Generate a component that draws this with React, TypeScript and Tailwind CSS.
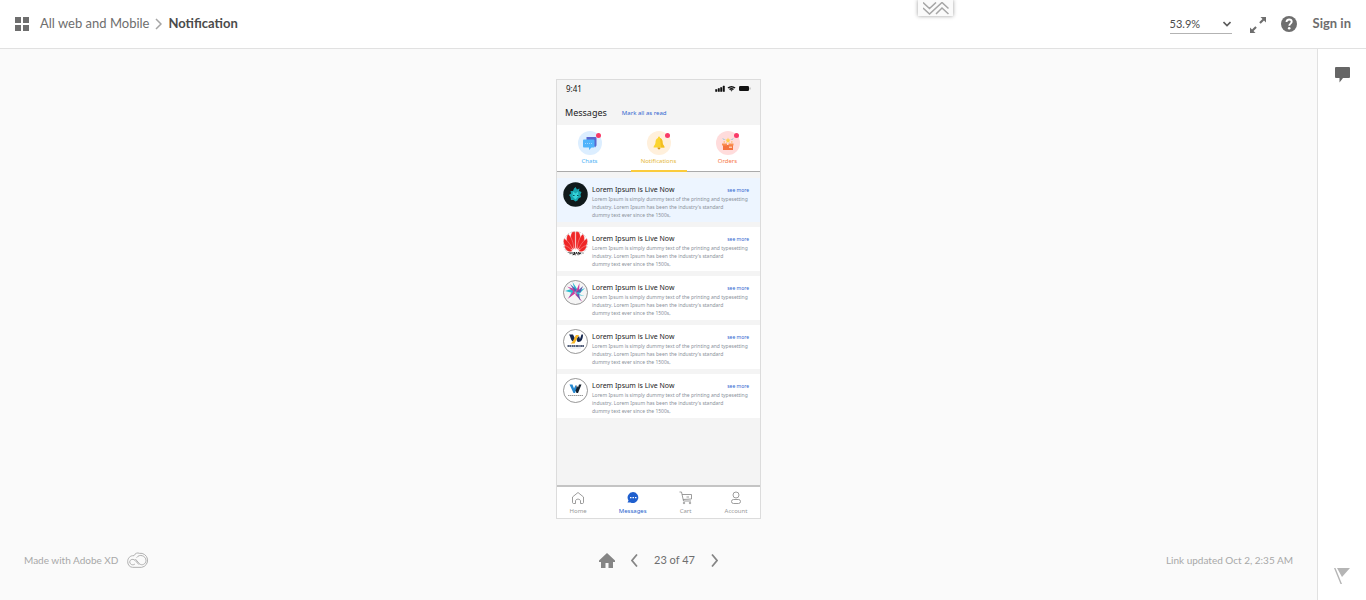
import type { ReactNode } from "react";

const ui = "font-['Lato','Open_Sans',sans-serif]";

function Avatar({ kind }: { kind: number }) {
  return (
    <svg viewBox="0 0 50 50" className="size-[25px] shrink-0" aria-hidden="true">
      {kind === 0 && (
        <g>
          <circle cx="25" cy="25" r="24.5" fill="#10191b" />
          <path d="M25 10l3 5 5-2-1 5 5 2-2 5 1 5-5 3-2 4-4 2-4-3-5 0-1-6-3-4 4-3-1-5 5 0 2-5z" fill="#17a3ad" />
          <path d="M20 19l5 4 5-4 1 9-6 7-6-6z" fill="#35d3d9" />
          <path d="M20 27h3m5 0h3" stroke="#0b4a52" strokeWidth="2" />
        </g>
      )}
      {kind === 1 && (
        <g>
          <circle cx="25" cy="25" r="24" fill="#fff" stroke="#888" strokeWidth="1" strokeDasharray="3 3" />
          <g fill="#ef2626" stroke="#fff" strokeWidth="0.6">
            <path d="M24.500 37C13 24 13 8 19 1.500h5.500z" />
            <path d="M25.500 37C37 24 37 8 31 1.500h-5.500z" />
            <path d="M22 37C9 30 3 16 10 6c7 5 11 18 12 31z" />
            <path d="M28 37c13-7 19-21 12-31-7 5-11 18-12 31z" />
            <path d="M20 38C7 37-2 27 2 15c7 3 14 14 18 23z" />
            <path d="M30 38c13-1 22-11 18-23-7 3-14 14-18 23z" />
            <path d="M19 40c-7 4-14 0-17-11 7 1 13 6 17 11z" />
            <path d="M31 40c7 4 14 0 17-11-7 1-13 6-17 11z" />
          </g>
          <path d="M11 42l3 3m2-3v4m4-4v5h3v-5m2 5l2-5 2 5m2-5l1 5 2-4 1 3m3-3l2 2" stroke="#222" strokeWidth="2" fill="none" />
        </g>
      )}
      {kind === 2 && (
        <g>
          <circle cx="25" cy="25" r="24" fill="#f5f5f5" stroke="#777" strokeWidth="1.5" />
          <path d="M25 25L19 4l10 15zM25 25L44 16l-13 13zM24 27L4 22l16-5zM24 26L12 35l6-14zM25 26L43 32l-13-2z" fill="#27bdd0" />
          <path d="M24 25L8 13l15 5zM25 25L33 6l-1 18zM24 27L9 38l12-16zM25 24l14 20-14-14z" fill="#cf3b9c" />
          <path d="M24 24L14 8l13 11zM27 24L40 12l-5 13zM27 29l8 13-3-14z" fill="#5460b0" />
        </g>
      )}
      {kind === 3 && (
        <g>
          <circle cx="25" cy="25" r="24" fill="#fff" stroke="#777" strokeWidth="1.5" />
          <path d="M12 11h8l4 8-3 6c-6-1-5-9-9-14z" fill="#14264d" />
          <path d="M26 12h6l-9 17h-8c6-3 7-12 11-17z" fill="#f6b422" />
          <path d="M28 19l4-5 2 6 3-9h3c0 9-3 15-9 15-3 0-4-3-3-7z" fill="#14264d" />
          <path d="M9 34h33" stroke="#1c2c50" strokeWidth="3" strokeDasharray="4 0.500 3 1" />
          <path d="M14 38h22" stroke="#c5c8d4" strokeWidth="1" />
        </g>
      )}
      {kind === 4 && (
        <g>
          <circle cx="25" cy="25" r="24" fill="#fff" stroke="#777" strokeWidth="1.5" />
          <path d="M13 13h6l3 8 3-7 3 6-4 10h-3z" fill="#2587cf" />
          <path d="M27 14l3 5 2-6h5l-7 17h-3l-2-5 2-5z" fill="#17222e" />
          <path d="M10 35h30" stroke="#777" strokeWidth="1.5" strokeDasharray="3 1" />
        </g>
      )}
    </svg>
  );
}

function ChatArt() {
  return (
    <svg viewBox="0 0 48 48" className="size-6" aria-hidden="true">
      <circle cx="24" cy="24" r="24" fill="#dceeff" />
      <path d="M17 12h17c2 0 3 1 3 3v14l-3 4-3-5H17z" fill="#5967cf" />
      <path d="M12 17h19c1 0 2 1 2 2v12c0 1-1 2-2 2h-4l-5 5v-5H12c-1 0-2-1-2-2V19c0-1 1-2 2-2z" fill="#4fb3fb" />
      <path d="M14 25h15" stroke="#9fd5ff" strokeWidth="2" strokeDasharray="2 2" />
    </svg>
  );
}

function BellArt() {
  return (
    <svg viewBox="0 0 48 48" className="size-6" aria-hidden="true">
      <circle cx="24" cy="24" r="24" fill="#fff0dc" />
      <path d="M24 11c2 0 2 2 2 3 4 1 5 5 5 9 0 5 4 6 4 10H13c0-4 4-5 4-10 0-4 1-8 5-9 0-1 0-3 2-3z" fill="#fbd42f" />
      <path d="M26 14c4 1 5 5 5 9 0 5 4 6 4 10h-7z" fill="#f3bd20" />
      <path d="M21 33h6c0 5-6 5-6 0z" fill="#d99a17" />
    </svg>
  );
}

function OrderArt() {
  return (
    <svg viewBox="0 0 48 48" className="size-6" aria-hidden="true">
      <circle cx="24" cy="24" r="24" fill="#ffdcdc" />
      <path d="M14 28h20v10H14z" fill="#f47340" />
      <path d="M12 25h10v4H12zM25 25h10v4H25z" fill="#fa8f50" />
      <path d="M26 31h6v3h-6z" fill="#ffcaa8" />
      <path d="M24 13l1.500 4 4 0-3 3 1 4-3.500-2-3.500 2 1-4-3-3 4 0z" fill="#ffcf4a" />
      <path d="M14 15l3 3m17-3l-3 3" stroke="#6cc5d8" strokeWidth="2" />
      <path d="M15 22h3m12 0h3" stroke="#ffb347" strokeWidth="2" />
    </svg>
  );
}

const tabs: { label: string; color: string; art: ReactNode; active?: boolean }[] = [
  { label: "Chats", color: "text-[#4db2f5]", art: <ChatArt /> },
  { label: "Notifications", color: "text-[#e6b93c]", art: <BellArt />, active: true },
  { label: "Orders", color: "text-[#f77a4a]", art: <OrderArt /> },
];

const rows = [0, 1, 2, 3, 4];

function Phone() {
  return (
    <article className="flex w-[205px] flex-col border border-[#dcdcdc] bg-[#f4f4f4] font-['Noto_Sans',sans-serif]">
      <div className="flex h-[17px] items-center justify-between pr-[9px] pl-[9px]">
        <span className="text-[8px] leading-4 text-[#111]">9:41</span>
        <svg viewBox="0 0 72 14" className="h-[7px] w-9" aria-hidden="true">
          <path d="M1 9h3v4H1zM6 7h3v6H6zM11 5h3v8h-3zM16 2h3v11h-3z" fill="#111" stroke="#111" />
          <path d="M25 5c5-4 11-4 16 0l-2 2c-4-3-8-3-12 0zM28 8c3-3 7-3 10 0l-2 2c-2-1-4-1-6 0zM31 11c1-1 3-1 4 0l-2 2z" fill="#111" />
          <rect x="48" y="2" width="20" height="10" rx="2.500" fill="#111" />
          <path d="M70 5v4" stroke="#888" strokeWidth="1.500" />
        </svg>
      </div>
      <div className="flex h-7 items-center gap-[15px] pt-1 pl-2">
        <h1 className="text-[9px] leading-3 text-[#222]">Messages</h1>
        <button type="button" className="text-[6px] leading-3 text-[#2f66d0]">Mark all as read</button>
      </div>
      <nav className="flex h-[47px] justify-center gap-[13px] border-b border-[#aaa] bg-white">
        {tabs.map((t) => (
          <a
            key={t.label}
            href="#"
            className={`relative -mb-px flex w-14 flex-col items-center pt-[6px] ${t.active ? "border-b-2 border-[#fbcb3b]" : ""}`}
          >
            {t.art}
            <span className="absolute top-2 left-[34px] size-[5px] rounded-full bg-[#f93a67]" />
            <span className={`pt-[2px] text-[6px] leading-2 ${t.color}`}>{t.label}</span>
          </a>
        ))}
      </nav>
      <ul className="flex flex-col gap-[5px] pt-[6px]">
        {rows.map((i) => (
          <li key={i} className={`flex h-11 gap-1 pr-[11px] pl-[6px] ${i === 0 ? "bg-[#edf5ff]" : "bg-white"}`}>
            <div className="pt-1">
              <Avatar kind={i} />
            </div>
            <div className="flex-1 pt-[7px]">
              <div className="flex items-center justify-between">
                <h2 className="text-[7px] leading-[10px] text-[#222]">Lorem Ipsum is Live Now</h2>
                <a href="#" className="text-[5px] leading-[10px] text-[#2f66d0]">see more</a>
              </div>
              <p className="text-[5px] leading-2 whitespace-nowrap text-[#8b929b]">
                Lorem Ipsum is simply dummy text of the printing and typesetting
                <br />
                industry. Lorem Ipsum has been the industry&apos;s standard
                <br />
                dummy text ever since the 1500s,
              </p>
            </div>
          </li>
        ))}
      </ul>
      <nav className="mt-[67px] flex h-[33px] justify-center gap-8 border-t-2 border-[#c4c4c4] bg-white text-[6px] text-[#999]">
        <a href="#" className="flex flex-col items-center pt-1">
          <svg viewBox="0 0 28 28" className="size-[14px]" fill="none" stroke="#8b8b8b" strokeWidth="1.700" aria-hidden="true">
            <path d="M3 12L14 3l11 9v11c0 1-1 2-2 2h-4v-5c0-5-10-5-10 0v5H5c-1 0-2-1-2-2z" strokeLinejoin="round" />
          </svg>
          <span className="leading-3">Home</span>
        </a>
        <a href="#" className="flex flex-col items-center pt-1 text-[#1f5fce]">
          <svg viewBox="0 0 28 28" className="size-[14px]" aria-hidden="true">
            <path d="M14 2a11 11 0 1 1-5 21H3l2-4A11 11 0 0 1 14 2z" fill="#1f5fce" />
            <path d="M8 13h3m2 0h3m2 0h3" stroke="#fff" strokeWidth="2.500" />
          </svg>
          <span className="leading-3">Messages</span>
        </a>
        <a href="#" className="flex flex-col items-center pt-1">
          <svg viewBox="0 0 28 28" className="size-[14px]" fill="none" stroke="#8b8b8b" strokeWidth="1.700" aria-hidden="true">
            <path d="M1 2h4l4 18h15M6 7h19v9l-17 1M15 12h5" />
            <circle cx="10" cy="24" r="1.500" />
            <circle cx="22" cy="24" r="1.500" />
          </svg>
          <span className="leading-3">Cart</span>
        </a>
        <a href="#" className="flex flex-col items-center pt-1">
          <svg viewBox="0 0 28 28" className="size-[14px]" fill="none" stroke="#8b8b8b" strokeWidth="1.700" aria-hidden="true">
            <circle cx="14" cy="8" r="6" />
            <rect x="5" y="17" width="18" height="8" rx="4" />
          </svg>
          <span className="leading-3">Account</span>
        </a>
      </nav>
    </article>
  );
}

export default function App() {
  return (
    <div className={`relative flex min-h-screen flex-col bg-[#fafafa] text-[13px] text-[#6e6e6e] ${ui}`}>
      <header className="flex h-[49px] items-center justify-between border-b border-[#e1e1e1] bg-white px-[15px]">
        <nav className="flex items-center">
          <button type="button" aria-label="All screens">
            <svg viewBox="0 0 14 14" className="size-[14px]" fill="#6e6e6e">
              <path d="M0 0h6v6H0zM8 0h6v6H8zM0 8h6v6H0zM8 8h6v6H8z" />
            </svg>
          </button>
          <a href="#" className="pl-[11px]">All web and Mobile</a>
          <svg viewBox="0 0 7 12" className="mx-[6px] h-3 w-[7px]" fill="none" stroke="#a5a5a5" strokeWidth="1.500" aria-hidden="true">
            <path d="M1 1l5 5-5 5" />
          </svg>
          <span className="font-bold text-[#4b4b4b]">Notification</span>
        </nav>
        <div className="flex items-center">
          <div className="relative flex w-[62px] items-center border-b border-[#b3b3b3]">
            <select aria-label="Zoom" className="w-full appearance-none bg-transparent text-[11px] leading-[18px] text-[#4b4b4b]">
              <option>53.9%</option>
            </select>
            <svg viewBox="0 0 8 6" className="pointer-events-none absolute right-[1px] h-[6px] w-2" fill="none" stroke="#5a5a5a" strokeWidth="1.600" aria-hidden="true">
              <path d="M0.500 1L4 4.500 7.500 1" />
            </svg>
          </div>
          <button type="button" aria-label="Full screen" className="ml-[18px] pt-[2px]">
            <svg viewBox="0 0 16 16" className="size-4" fill="#6e6e6e">
              <path d="M10.500 0H16v5.500l-2-2-3.300 3.300-1.500-1.500L12.500 2zM5.500 16H0v-5.500l2 2 3.300-3.300 1.500 1.500L3.500 14z" />
            </svg>
          </button>
          <button type="button" aria-label="Help" className="ml-[15px]">
            <svg viewBox="0 0 16 16" className="size-4">
              <circle cx="8" cy="8" r="8" fill="#6e6e6e" />
              <path d="M5.500 6C5.500 2.500 10.700 2.800 10.700 5.700 10.700 7.600 8.300 7.700 8.300 9.800" fill="none" stroke="#fff" strokeWidth="1.900" />
              <circle cx="8.200" cy="12.200" r="1.300" fill="#fff" />
            </svg>
          </button>
          <a href="#" className="ml-4 font-bold">Sign in</a>
        </div>
      </header>
      <button
        type="button"
        aria-label="Toggle header"
        className="absolute top-0 left-[918px] flex h-4 w-[35px] items-center justify-center bg-[#fafafa] shadow-[0_0_4px_rgba(0,0,0,0.4)]"
      >
        <svg viewBox="0 0 26 13" className="mt-px h-[13px] w-[26px]" fill="none" stroke="#a5a5a5" strokeWidth="1.500">
          <path d="M0 0.500l6.500 6L13 0.500M0 6l6.500 6L19 0.500l6.500 6M13 12l6-6 6.500 6" />
        </svg>
      </button>
      <div className="flex flex-1">
        <main className="flex flex-1 flex-col items-center justify-between pt-[30px]">
          <Phone />
          <footer className="grid w-full grid-cols-3 items-center px-6 pb-[30px] text-[10px] leading-5 text-[#a8a8a8]">
            <div className="flex items-center gap-[9px]">
              <span>Made with Adobe XD</span>
              <svg viewBox="0 0 66 48" className="h-4 w-[22px]" fill="none" stroke="#b0b0b0" strokeWidth="3" aria-hidden="true">
                <path d="M17 46h27a20 20 0 1 0-7-42C32 1 24 4 21 11 9 10 2 19 2 29s7 17 15 17z" />
                <path d="M36 38L24 25c-8-7-19 0-15 8 3 7 11 6 15 3M29 17c8-13 28-5 28 8 0 12-13 17-20 10L25 21" />
              </svg>
            </div>
            <div className="flex items-center justify-center text-[11px] text-[#6e6e6e]">
              <button type="button" aria-label="Home">
                <svg viewBox="0 0 16 15" className="h-[15px] w-4" fill="#858585">
                  <path d="M8 0l8 7.500V9h-2v6H9.500v-5h-3v5H2V9H0V7.500z" />
                </svg>
              </button>
              <button type="button" aria-label="Previous" className="ml-4">
                <svg viewBox="0 0 7 13" className="h-[13px] w-[7px]" fill="none" stroke="#858585" strokeWidth="1.700">
                  <path d="M6 0.500l-5 6 5 6" />
                </svg>
              </button>
              <span className="mx-4">23 of 47</span>
              <button type="button" aria-label="Next">
                <svg viewBox="0 0 7 13" className="h-[13px] w-[7px]" fill="none" stroke="#858585" strokeWidth="1.700">
                  <path d="M1 0.500l5 6-5 6" />
                </svg>
              </button>
            </div>
            <span className="text-right">Link updated Oct 2, 2:35 AM</span>
          </footer>
        </main>
        <aside className="flex w-[49px] flex-col items-center justify-between border-l border-[#e1e1e1] bg-white pt-[18px] pb-4">
          <button type="button" aria-label="Comments">
            <svg viewBox="0 0 15 16" className="h-4 w-[15px]" fill="#666">
              <path d="M1 0h13a1 1 0 0 1 1 1v9a1 1 0 0 1-1 1H8l-3.500 4.500V11H1a1 1 0 0 1-1-1V1a1 1 0 0 1 1-1z" />
            </svg>
          </button>
          <button type="button" aria-label="Report">
            <svg viewBox="0 0 16 16" className="size-4" fill="#b5b5b5">
              <path d="M0 0h1.500L8 16H6.500zM3 0h13L8 9z" />
            </svg>
          </button>
        </aside>
      </div>
    </div>
  );
}
